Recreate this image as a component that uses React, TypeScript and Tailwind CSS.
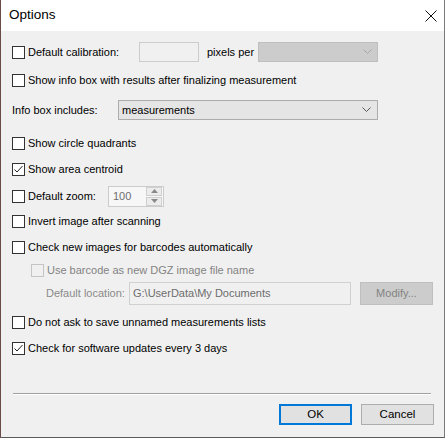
import React from "react";

const font = { fontFamily: '"Liberation Sans", Arial, sans-serif' };

function Box({ checked = false, disabled = false }: { checked?: boolean; disabled?: boolean }) {
  return (
    <div
      className={`w-[13px] h-[13px] shrink-0 border flex items-center justify-center ${
        disabled ? "border-[#c4c4c4] bg-[#f0f0f0]" : "border-[#333333] bg-white"
      }`}
    >
      {checked && (
        <svg width="11" height="11" viewBox="0 0 11 11">
          <path d="M1.5 5.5 L4 8 L9.5 2" fill="none" stroke="#222" strokeWidth="1" />
        </svg>
      )}
    </div>
  );
}

function Check({ label, checked, disabled, className = "" }: { label: string; checked?: boolean; disabled?: boolean; className?: string }) {
  return (
    <div className={`flex items-center h-[13px] ${className}`}>
      <Box checked={checked} disabled={disabled} />
      <span className={`ml-[3px] text-[11px] leading-none whitespace-nowrap ${disabled ? "text-[#838383]" : "text-black"}`}>{label}</span>
    </div>
  );
}

function Chevron({ color }: { color: string }) {
  return (
    <svg width="9" height="6" viewBox="0 0 9 6">
      <path d="M0.5 0.5 L4.5 4.5 L8.5 0.5" fill="none" stroke={color} strokeWidth="1" />
    </svg>
  );
}

function Arrow({ up }: { up?: boolean }) {
  return (
    <svg width="7" height="4" viewBox="0 0 7 4">
      <path d={up ? "M0 4 L3.5 0 L7 4 Z" : "M0 0 L3.5 4 L7 0 Z"} fill="#8a8a8a" />
    </svg>
  );
}

export default function App() {
  return (
    <div className="w-[445px] h-[438px] bg-[#f0f0f0] border-l border-r border-b border-l-[#6b4a4a] border-r-[#7a7a7a] border-b-[#5a5a5a] flex flex-col overflow-hidden" style={font}>
      {/* title bar */}
      <div className="h-[31px] bg-white flex items-center justify-between pl-[8px] pr-[7px] shrink-0">
        <span className="text-[13.5px] text-black">Options</span>
        <svg width="12" height="12" viewBox="0 0 12 12">
          <path d="M0.5 0.5 L11.5 11.5 M11.5 0.5 L0.5 11.5" stroke="#111" strokeWidth="1" />
        </svg>
      </div>

      <div className="flex flex-col pl-[11px]">
        {/* calibration */}
        <div className="mt-[11px] h-[20px] flex items-center">
          <div className="w-[127px]"><Check label="Default calibration:" /></div>
          <div className="w-[60px] h-[20px] border border-[#cccccc] bg-[#f0f0f0]" />
          <span className="ml-[8px] w-[51px] text-[11px] text-black">pixels per</span>
          <div className="w-[120px] h-[20px] border border-[#bfbfbf] bg-[#cccccc] flex items-center justify-end pr-[5px]">
            <Chevron color="#a8a8a8" />
          </div>
        </div>

        <Check className="mt-[12px]" label="Show info box with results after finalizing measurement" />

        <div className="mt-[13px] h-[20px] flex items-center">
          <span className="text-[11px] text-black w-[106px]">Info box includes:</span>
          <div className="w-[260px] h-[20px] border border-[#acacac] bg-[#e5e5e5] flex items-center justify-between pl-[3px] pr-[6px]">
            <span className="text-[11px] text-black">measurements</span>
            <Chevron color="#555555" />
          </div>
        </div>

        <Check className="mt-[17px]" label="Show circle quadrants" />
        <Check className="mt-[13px]" label="Show area centroid" checked />

        <div className="mt-[10px] h-[20px] flex items-center">
          <div className="w-[96px]"><Check label="Default zoom:" /></div>
          <div className="w-[56px] h-[21px] border border-[#cccccc] bg-[#f7f7f7] flex items-center justify-between">
            <span className="ml-[4px] text-[11px] text-[#6d6d6d]">100</span>
            <div className="flex flex-col w-[16px] h-[19px] mr-[1px] gap-[1px]">
              <div className="flex-1 border border-[#cfcfcf] bg-[#ececec] flex items-center justify-center"><Arrow up /></div>
              <div className="flex-1 border border-[#cfcfcf] bg-[#ececec] flex items-center justify-center"><Arrow /></div>
            </div>
          </div>
        </div>

        <Check className="mt-[9px]" label="Invert image after scanning" />
        <Check className="mt-[13px]" label="Check new images for barcodes automatically" />
        <Check className="mt-[10px] ml-[19px]" label="Use barcode as new DGZ image file name" disabled />

        <div className="mt-[5px] h-[23px] flex items-center pl-[34px]">
          <span className="text-[11px] text-[#8a8a8a] w-[83px]">Default location:</span>
          <div className="w-[222px] h-[23px] border border-[#d0d0d0] bg-[#f0f0f0] flex items-center pl-[3px]">
            <span className="text-[11px] text-[#6d6d6d]">G:\UserData\My Documents</span>
          </div>
          <div className="ml-[9px] w-[73px] h-[23px] border border-[#bfbfbf] bg-[#cccccc] flex items-center justify-center">
            <span className="text-[11px] text-[#838383]">Modify...</span>
          </div>
        </div>

        <Check className="mt-[11px]" label="Do not ask to save unnamed measurements lists" />
        <Check className="mt-[13px]" label="Check for software updates every 3 days" checked />

        <div className="mt-[38px] mr-[13px] ml-[1px] h-[1px] bg-[#a0a0a0] border-b border-b-white box-content" />

        <div className="mt-[9px] flex justify-end gap-[9px] pr-[10px]">
          <button className="w-[73px] h-[21px] border-2 border-[#0078d7] bg-[#e1e1e1] text-[11.5px] text-black">OK</button>
          <button className="w-[73px] h-[21px] border border-[#adadad] bg-[#e1e1e1] text-[11.5px] text-black">Cancel</button>
        </div>
      </div>
    </div>
  );
}
